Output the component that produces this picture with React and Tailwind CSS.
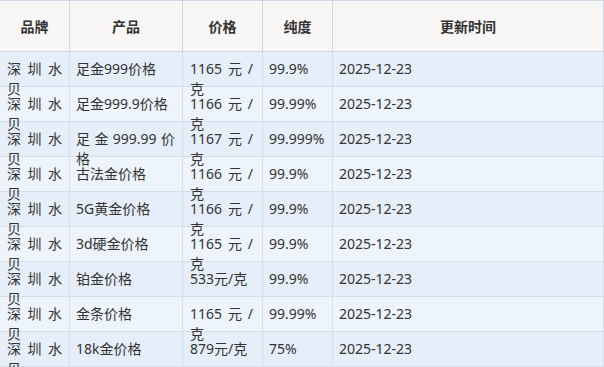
import React from 'react';

const rows = [
    { product: '足金999价格', price: '1165元/克', purity: '99.9%' },
    { product: '足金999.9价格', price: '1166元/克', purity: '99.99%' },
    { product: '足金999.99价格', price: '1167元/克', purity: '99.999%' },
    { product: '古法金价格', price: '1166元/克', purity: '99.9%' },
    { product: '5G黄金价格', price: '1166元/克', purity: '99.9%' },
    { product: '3d硬金价格', price: '1165元/克', purity: '99.9%' },
    { product: '铂金价格', price: '533元/克', purity: '99.9%' },
    { product: '金条价格', price: '1165元/克', purity: '99.99%' },
    { product: '18k金价格', price: '879元/克', purity: '75%' },
];

export default function App() {
    return (
        <div
            className="w-[604px] h-[367px] overflow-hidden bg-white text-[14px] text-[#333]"
            style={{ fontFamily: '"Noto Sans", "Noto Sans CJK SC", sans-serif' }}
        >
            {/* header */}
            <div className="flex h-[52px] bg-[#f8f7f6] border-t border-b border-[#cdd9e6] font-bold">
                <div className="w-[70px] shrink-0 border-r border-[#cdd9e6] flex items-center justify-center">品牌</div>
                <div className="w-[113px] shrink-0 border-r border-[#cdd9e6] flex items-center justify-center">产品</div>
                <div className="w-[80px] shrink-0 border-r border-[#cdd9e6] flex items-center justify-center">价格</div>
                <div className="w-[70px] shrink-0 border-r border-[#cdd9e6] flex items-center justify-center">纯度</div>
                <div className="w-[271px] shrink-0 border-r border-[#cdd9e6] flex items-center justify-center">更新时间</div>
            </div>

            {rows.map((row, i) => (
                <div
                    key={i}
                    className={`flex h-[35px] border-b border-[#d6e0ec] ${i % 2 === 0 ? 'bg-[#e5eef9]' : 'bg-[#edf4fc]'}`}
                >
                    <div className="w-[70px] shrink-0 border-r border-[#d6e0ec] pl-[7px] pr-[7px] pt-[7px] leading-5 text-justify">深圳水贝</div>
                    <div className="w-[113px] shrink-0 border-r border-[#d6e0ec] pl-[6px] pr-[7px] pt-[7px] leading-5 text-justify">{row.product}</div>
                    <div className="w-[80px] shrink-0 border-r border-[#d6e0ec] pl-[7px] pr-[9px] pt-[7px] leading-5 text-justify">{row.price}</div>
                    <div className="w-[70px] shrink-0 border-r border-[#d6e0ec] pl-[6px] pr-[2px] pt-[7px] leading-5 whitespace-nowrap">{row.purity}</div>
                    <div className="w-[271px] shrink-0 border-r border-[#d6e0ec] pl-[6px] pt-[7px] leading-5">2025-12-23</div>
                </div>
            ))}
        </div>
    );
}
